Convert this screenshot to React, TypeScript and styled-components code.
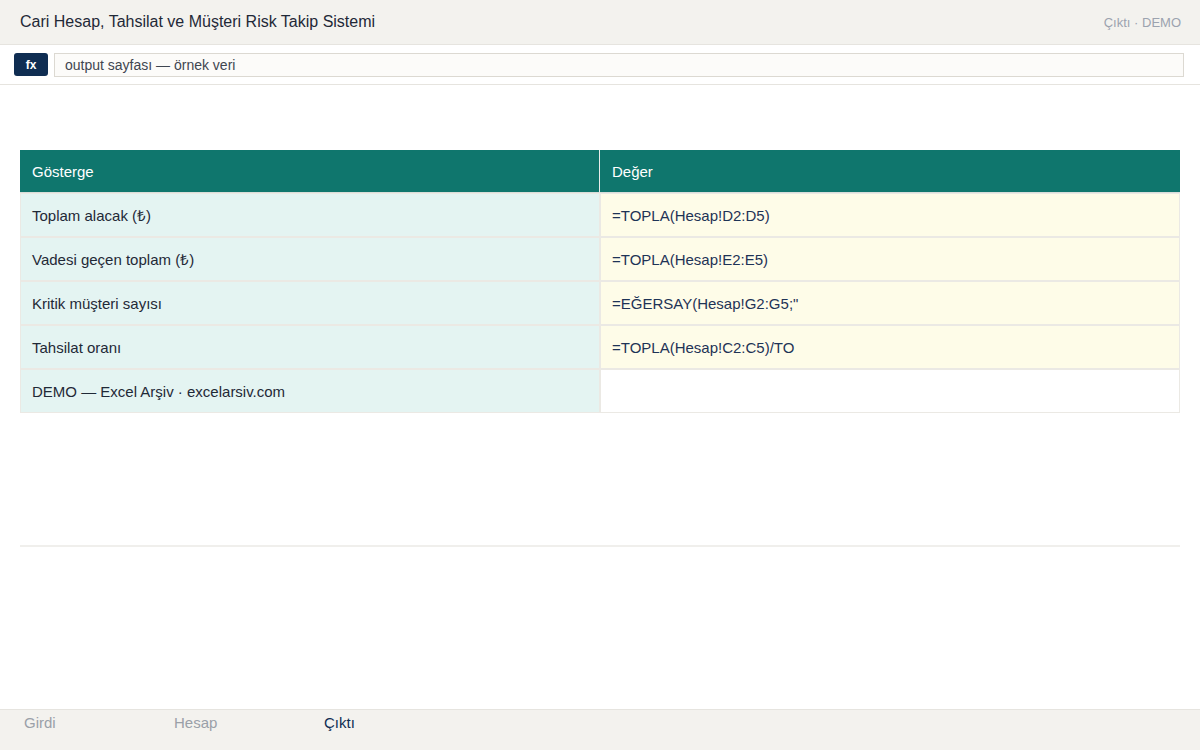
import React from "react";
import styled, { createGlobalStyle } from "styled-components";

const Global = createGlobalStyle`
  html, body { margin: 0; padding: 0; background: #ffffff; }
  body { font-family: "Liberation Sans", Arial, Helvetica, sans-serif; }
  * { box-sizing: border-box; }
`;

const Page = styled.div`
  height: 750px;
  display: flex;
  flex-direction: column;
  background: #ffffff;
`;

const TopBar = styled.header`
  height: 45px;
  flex: none;
  background: #f3f2ee;
  border-bottom: 1px solid #e6e4df;
  display: flex;
  align-items: center;
  justify-content: space-between;
  padding: 0 19px 0 20px;
`;

const Title = styled.h1`
  margin: 0;
  font-size: 16px;
  font-weight: 400;
  color: #1f2937;
`;

const Meta = styled.span`
  font-size: 13px;
  color: #9ca3af;
`;

const FormulaBar = styled.div`
  height: 40px;
  flex: none;
  display: flex;
  align-items: center;
  gap: 6px;
  padding: 0 16px 0 14px;
  border-bottom: 1px solid #e6e4df;
`;

const FxBadge = styled.span`
  width: 34px;
  height: 23px;
  border-radius: 3px;
  background: #0f2d52;
  color: #ffffff;
  font-size: 12px;
  font-weight: 700;
  display: flex;
  align-items: center;
  justify-content: center;
`;

const FormulaInput = styled.div`
  flex: 1;
  height: 24px;
  border: 1px solid #dcd9d2;
  background: #fcfbf9;
  font-size: 14px;
  color: #3f4650;
  display: flex;
  align-items: center;
  padding: 0 10px;
`;

const Main = styled.main`
  flex: 1;
  padding: 65px 20px 0 20px;
  display: flex;
  flex-direction: column;
`;

const Table = styled.table`
  width: 100%;
  border-collapse: separate;
  border-spacing: 0;
  table-layout: fixed;
  font-size: 15px;
`;

const HeadCell = styled.th<{ $last?: boolean }>`
  height: 43px;
  background: #0f766d;
  color: #ffffff;
  font-weight: 400;
  text-align: left;
  padding: 0 12px;
  border-bottom: 1px solid #d9ddd9;
  border-right: ${(p) => (p.$last ? "none" : "1px solid #e8ecea")};
`;

const Cell = styled.td<{ $kind: "label" | "value" | "empty" }>`
  height: 44px;
  padding: 0 11px;
  border: 1px solid #ebe9e4;
  background: ${(p) =>
    p.$kind === "label" ? "#e4f4f2" : p.$kind === "value" ? "#fefce8" : "#ffffff"};
  color: ${(p) => (p.$kind === "label" ? "#1f2937" : "#1e3356")};
  white-space: nowrap;
  overflow: hidden;
`;

const Divider = styled.hr`
  margin: 132px 0 0 0;
  border: none;
  border-top: 2px solid #f0efec;
`;

const TabBar = styled.nav`
  height: 41px;
  flex: none;
  background: #f3f2ee;
  border-top: 1px solid #e6e4df;
  display: flex;
  align-items: flex-start;
`;

const Tab = styled.span<{ $active?: boolean }>`
  width: 150px;
  padding: 4px 0 0 24px;
  font-size: 15px;
  color: ${(p) => (p.$active ? "#0f2d52" : "#9aa0a8")};
`;

const rows: { label: string; value: string }[] = [
  { label: "Toplam alacak (₺)", value: "=TOPLA(Hesap!D2:D5)" },
  { label: "Vadesi geçen toplam (₺)", value: "=TOPLA(Hesap!E2:E5)" },
  { label: "Kritik müşteri sayısı", value: "=EĞERSAY(Hesap!G2:G5;\"" },
  { label: "Tahsilat oranı", value: "=TOPLA(Hesap!C2:C5)/TO" },
];

export default function App() {
  return (
    <>
      <Global />
      <Page>
        <TopBar>
          <Title>Cari Hesap, Tahsilat ve Müşteri Risk Takip Sistemi</Title>
          <Meta>Çıktı · DEMO</Meta>
        </TopBar>
        <FormulaBar>
          <FxBadge>fx</FxBadge>
          <FormulaInput>output sayfası — örnek veri</FormulaInput>
        </FormulaBar>
        <Main>
          <Table>
            <thead>
              <tr>
                <HeadCell>Gösterge</HeadCell>
                <HeadCell $last>Değer</HeadCell>
              </tr>
            </thead>
            <tbody>
              {rows.map((r) => (
                <tr key={r.label}>
                  <Cell $kind="label">{r.label}</Cell>
                  <Cell $kind="value">{r.value}</Cell>
                </tr>
              ))}
              <tr>
                <Cell $kind="label">DEMO — Excel Arşiv · excelarsiv.com</Cell>
                <Cell $kind="empty" />
              </tr>
            </tbody>
          </Table>
          <Divider />
        </Main>
        <TabBar>
          <Tab>Girdi</Tab>
          <Tab>Hesap</Tab>
          <Tab $active>Çıktı</Tab>
        </TabBar>
      </Page>
    </>
  );
}
